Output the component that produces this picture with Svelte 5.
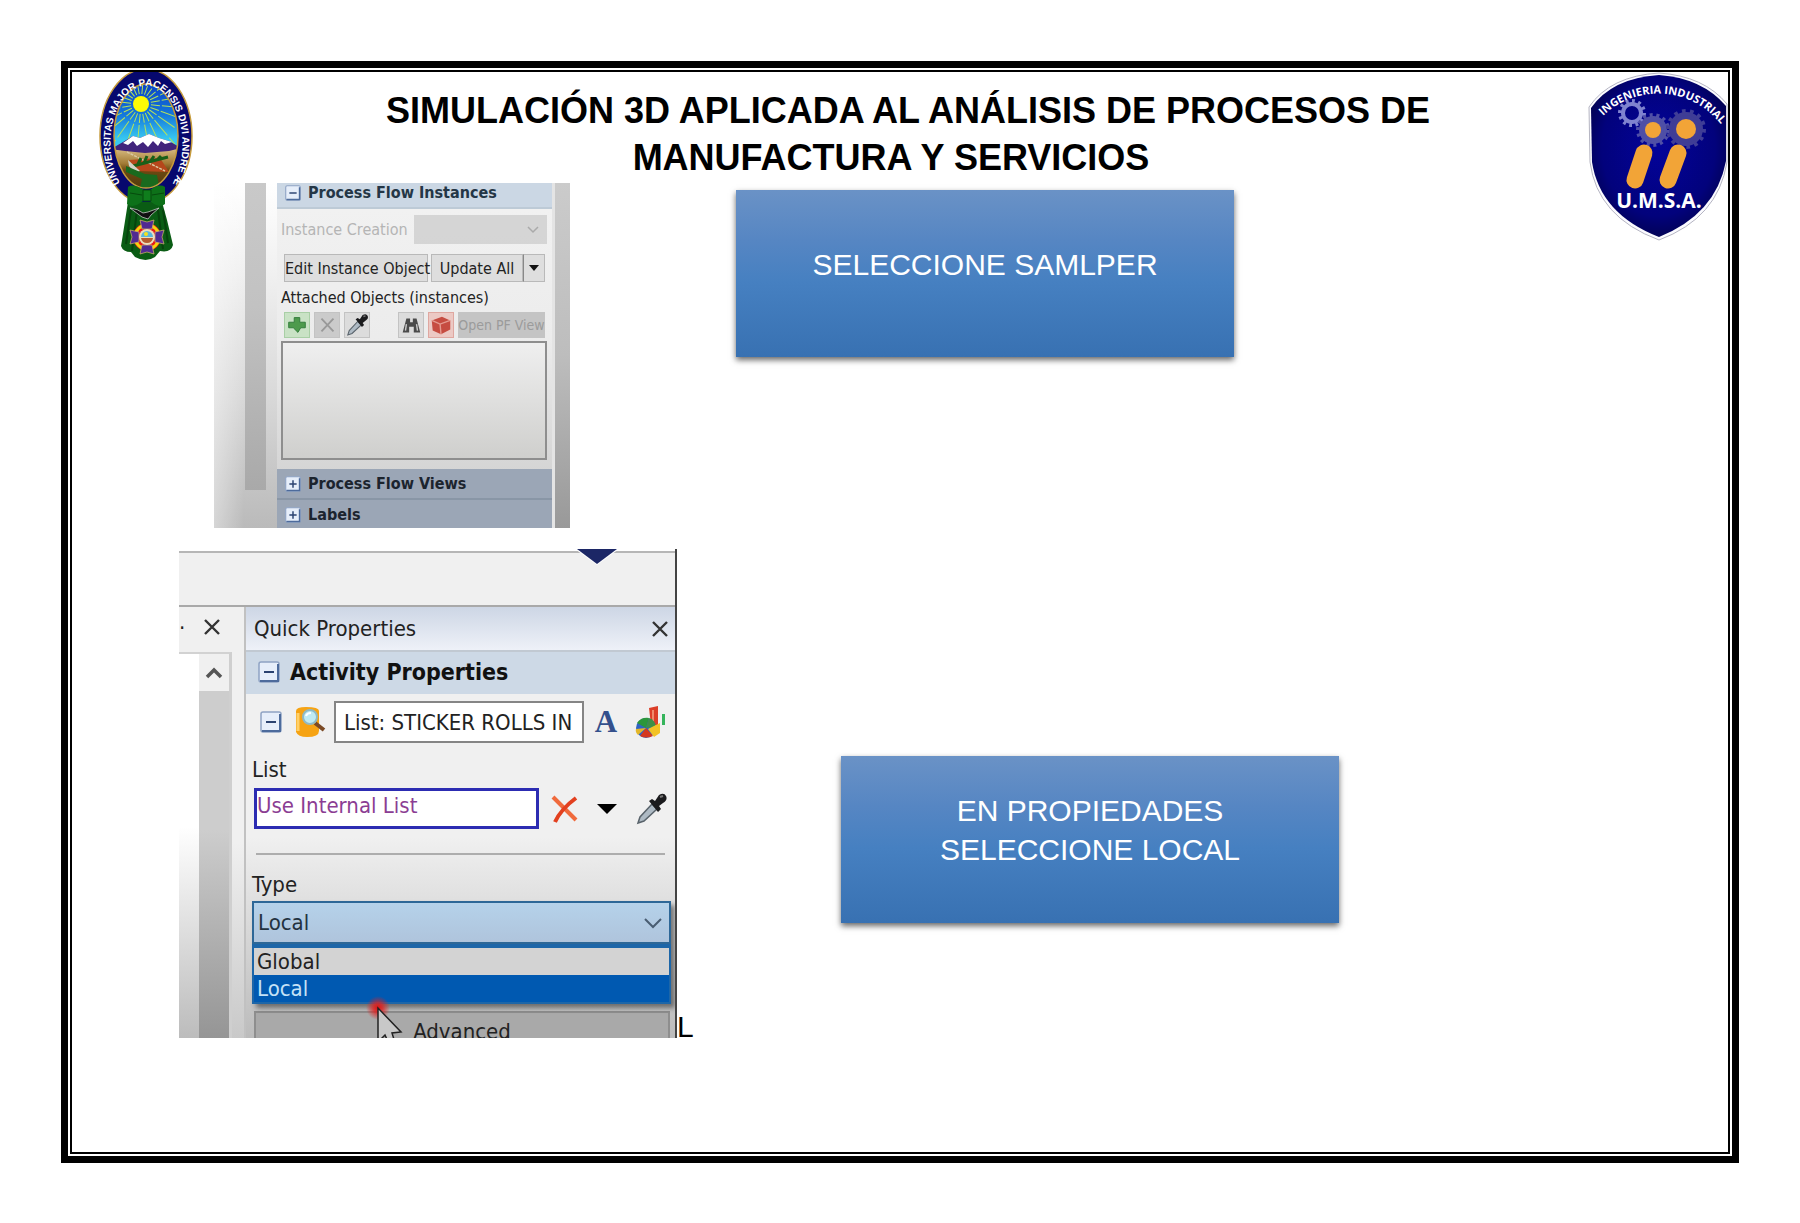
<script>
  let instanceMode = $state('');
  let type = $state('Local');
  let activity = $state('List: STICKER ROLLS IN');
  let source = $state('Use Internal List');
  const types = ['Global', 'Local'];
  const rays = Array.from({ length: 24 }, (_, i) => i * 15 + 5);
  const gears = [
    { x: 44, y: 41, r: 10, color: '#7f83cf', teeth: 12 },
    { x: 65, y: 58, r: 13, color: '#4f4fa6', teeth: 14 },
    { x: 98, y: 57, r: 16, color: '#3f3d96', teeth: 14 }
  ];
</script>

{#snippet toggle(label, plus)}
  <button class="toggle" aria-label={label}>
    <svg viewBox="0 0 22 22" aria-hidden="true">
      <rect x="1" y="1" width="20" height="20" rx="2" fill="#e6eefa" stroke="#8fa3c4" stroke-width="1.5" />
      <path d="M2 20H20V3" fill="none" stroke="#4d6b9c" stroke-width="2" />
      <path d={plus ? 'M6 11H16M11 6V16' : 'M6 11H16'} stroke="#2a4270" stroke-width="2" />
    </svg>
  </button>
{/snippet}

{#snippet dropper()}
  <svg viewBox="0 0 32 34" aria-hidden="true">
    <path d="M3 31L5 25L17 12L22 17L9 29Z" fill="#aebac4" stroke="#59636b" stroke-width="1.5" />
    <path d="M14 9L17 7L20 9L24 3Q29 0 31 4Q33 8 28 11L24 14L26 17L23 20Z" fill="#1b1b1d" />
    <path d="M25 5L28 4" stroke="#777" stroke-width="2" />
  </svg>
{/snippet}

<main class="page">
  <div class="frame">
    <div class="sheet">
      <header>
        <svg class="crest" viewBox="0 0 95 188" role="img" aria-label="Universitas Major Pacensis Divi Andreae">
          <defs>
            <linearGradient id="sky" x1="0" y1="0" x2="0" y2="1">
              <stop offset="0" stop-color="#0a3fc4" />
              <stop offset="0.3" stop-color="#1478dc" />
              <stop offset="0.52" stop-color="#38c8f0" />
            </linearGradient>
            <linearGradient id="land" x1="0" y1="0" x2="0" y2="1">
              <stop offset="0" stop-color="#d9bd84" />
              <stop offset="0.35" stop-color="#a37c36" />
              <stop offset="0.5" stop-color="#6d4a12" />
              <stop offset="1" stop-color="#4d360c" />
            </linearGradient>
            <clipPath id="oval"><ellipse cx="47" cy="64" rx="32" ry="52" /></clipPath>
            <path id="motto" d="M21 111A36 58 0 1 1 75 109" />
          </defs>
          <ellipse cx="47" cy="64" rx="46" ry="67" fill="#07086e" stroke="#c69b3c" stroke-width="1.5" />
          <g clip-path="url(#oval)">
            <rect x="12" y="10" width="70" height="110" fill="url(#sky)" />
            {#each rays as a}
              <path d="M42 22V-22" stroke="#b4e25a" stroke-width="1" stroke-dasharray="9 2 20 3" transform="rotate({a} 42 32)" />
            {/each}
            <circle cx="42" cy="32" r="8" fill="#fdfb05" />
            <rect x="12" y="76" width="70" height="44" fill="url(#land)" />
            <path d="M12 77L24 70L34 64L41 66L50 62L60 66L70 69L82 76L70 79L46 81L26 79Z" fill="#41247c" />
            <path d="M24 71L34 64L41 66L50 62L60 66L73 70L66 72L62 69L59 74L54 69L49 75L44 70L38 74L34 69L29 73Z" fill="#fff" />
            <path d="M30 88L61 86L70 100L38 99Z" fill="#b5471b" />
            <path d="M28 80L66 99" stroke="#d9c8a0" stroke-width="1.5" stroke-dasharray="3 1" />
            <path d="M34 94L69 85M39 92L42 86M45 91L48 84M51 90L55 84M58 88L62 84" stroke="#185f18" stroke-width="3" />
            <path d="M29 88L41 99L36 101L30 94Z" fill="#d2d2c8" />
            <path d="M27 94L46 102L58 103L61 120H40L43 107L27 100Z" fill="#1a6a1e" />
          </g>
          <ellipse cx="47" cy="64" rx="32" ry="52" fill="none" stroke="#c69b3c" stroke-width="1.5" />
          <text class="motto"><textPath href="#motto">UNIVERSITAS MAJOR PACENSIS DIVI ANDRE Æ</textPath></text>
          <path d="M29 130L23 168L22 174Q24 180 32 180L36 185Q47 191 56 185L61 179Q72 181 74 173L68 148L63 130Z" fill="#0a5c14" />
          <path d="M32 138L27 172M38 138L33 179M59 138L64 177M64 138L69 171" stroke="#07430d" stroke-width="2" />
          <path d="M29 115Q34 111 45 118H51Q60 111 66 115V132Q60 137 51 129H44Q34 137 28 132Z" fill="#0d7119" />
          <path d="M44 118H52V129H44ZM31 121L43 123M65 121L53 123" stroke="#064a0d" stroke-width="1" fill="#0f7d1c" />
          <path d="M31 136Q39 137 44 141L49 140L60 136L52 143L49 147L43 145Z" fill="#111" stroke="#ddd" stroke-width="0.7" />
          <circle cx="48" cy="165" r="14" fill="#e51b1b" />
          <circle cx="48" cy="165" r="12" fill="none" stroke="#f6d30b" stroke-width="3" />
          <g fill="#512a92" stroke="#d7b768" stroke-width="0.7">
            <path d="M41 148L48 150L55 148L53 157H43ZM41 182L48 180L55 182L53 173H43ZM31 158L33 165L31 172L40 170V160ZM65 158L63 165L65 172L56 170V160Z" />
          </g>
          <circle cx="48" cy="165" r="8" fill="#eadfbe" />
          <path d="M42 165A6 6 0 0 1 54 165Z" fill="#5bb7dc" />
          <path d="M42 166H54Q53 171 48 171Q43 171 42 166Z" fill="#b65c2e" />
          <circle cx="47" cy="162" r="2" fill="#f6e21a" />
        </svg>

        <h1>SIMULACIÓN 3D APLICADA AL ANÁLISIS DE PROCESOS DE<br />MANUFACTURA Y SERVICIOS</h1>

        <svg class="shield" viewBox="0 0 140 170" role="img" aria-label="Ingenieria Industrial U.M.S.A.">
          <defs>
            <radialGradient id="navy" cx="0.5" cy="0.45" r="0.6">
              <stop offset="0" stop-color="#03039a" />
              <stop offset="0.7" stop-color="#02027c" />
              <stop offset="1" stop-color="#020248" />
            </radialGradient>
            <path id="arch" d="M15 44A79 79 0 0 1 138 60" />
          </defs>
          <path d="M71 1Q116 4 139 32V90Q130 146 71 168Q9 145 2 90L1 35Q22 4 71 1Z" fill="#fbfbff" stroke="#b5b5c2" stroke-width="1" />
          <path d="M71 3Q114 6 138 34V89Q128 142 71 165Q12 142 4 90L3 36Q24 6 71 3Z" fill="url(#navy)" />
          {#each gears as g}
            <circle cx={g.x} cy={g.y} r={g.r - 1} fill="none" stroke={g.color} stroke-width="4" />
            <circle cx={g.x} cy={g.y} r={g.r + 2} fill="none" stroke={g.color} stroke-width="4" pathLength={g.teeth * 2} stroke-dasharray="0.9 1.1" />
          {/each}
          <circle cx="65" cy="58" r="11" fill="#4f4fa6" />
          <circle cx="98" cy="57" r="14" fill="#3f3d96" />
          <circle cx="65" cy="58" r="8" fill="#f2a437" />
          <circle cx="98" cy="57" r="10" fill="#f2a437" />
          <path d="M56 81L47 108M90 81L80 108" stroke="#f2a437" stroke-width="17" stroke-linecap="round" />
          <text class="arch"><textPath href="#arch">INGENIERIA INDUSTRIAL</textPath></text>
          <text class="umsa" x="71" y="136" text-anchor="middle">U.M.S.A.</text>
        </svg>
      </header>

      <section class="step first">
        <div class="shot instances">
          <div class="track"><i></i></div>
          <div class="pane">
            <h2 class="bar">{@render toggle('Collapse Process Flow Instances', false)}Process Flow Instances</h2>
            <div class="body">
              <div class="creation">
                <label for="mode">Instance Creation</label>
                <select id="mode" bind:value={instanceMode} disabled><option value=""></option></select>
                <svg class="tick" viewBox="0 0 12 8" aria-hidden="true"><path d="M1 1L6 6L11 1" fill="none" stroke="#aaa" stroke-width="1.5" /></svg>
              </div>
              <div class="actions">
                <button class="edit">Edit Instance Object</button>
                <button class="update">Update All</button>
                <button class="more" aria-label="Update options"><svg viewBox="0 0 10 6" aria-hidden="true"><path d="M0 0H10L5 6Z" fill="#111" /></svg></button>
              </div>
              <p>Attached Objects (instances)</p>
              <div class="tools">
                <button class="tool green" aria-label="Add"><svg viewBox="0 0 26 26" aria-hidden="true"><path d="M10 5H16V10H22V16H17L14 21L9 16H4V10H10Z" fill="#4d9a4c" stroke="#2f7a38" /></svg></button>
                <button class="tool dim" aria-label="Remove"><svg viewBox="0 0 26 26" aria-hidden="true"><path d="M7 6L20 20M20 6L7 20" stroke="#999" stroke-width="2" /></svg></button>
                <button class="tool wide" aria-label="Sample">{@render dropper()}</button>
                <button class="tool" aria-label="Find"><svg viewBox="0 0 26 26" aria-hidden="true"><path d="M4 21L8 6H12V10H15V6H19L23 21H16V15H11V21Z" fill="#4a4a4a" /><path d="M8 12L7 19M19 12L20 19" stroke="#ccc" stroke-width="1.5" /></svg></button>
                <button class="tool red" aria-label="Model"><svg viewBox="0 0 26 26" aria-hidden="true"><path d="M3 8L14 4L23 8V18L13 23L4 19Z" fill="#c64c41" /><path d="M3 8L12 12L23 8M12 12L13 23" fill="none" stroke="#e49a90" stroke-width="1.5" /></svg></button>
                <button class="open" disabled>Open PF View</button>
              </div>
              <div class="objects" role="listbox" aria-label="Attached Objects" tabindex="0"></div>
            </div>
            <h2 class="bar low">{@render toggle('Expand Process Flow Views', true)}Process Flow Views</h2>
            <h2 class="bar low">{@render toggle('Expand Labels', true)}Labels</h2>
          </div>
          <div class="edge"></div>
        </div>
        <div class="callout">SELECCIONE SAMLPER</div>
      </section>

      <section class="step second">
        <div class="shot quick">
          <div class="ribbon">
            <svg viewBox="0 0 44 16" aria-hidden="true"><path d="M0 0H44L22 16Z" fill="#fff" /><path d="M2 0H42L22 15Z" fill="#1c2766" /></svg>
          </div>
          <div class="split">
            <div class="doc">
              <div class="tab">
                <span>·</span>
                <button class="close" aria-label="Close view"><svg viewBox="0 0 18 16" aria-hidden="true"><path d="M2 1L16 15M16 1L2 15" stroke="#333" stroke-width="2.4" /></svg></button>
              </div>
              <div class="scroll">
                <button class="up" aria-label="Scroll up"><svg viewBox="0 0 18 12" aria-hidden="true"><path d="M2 10L9 3L16 10" fill="none" stroke="#555" stroke-width="3.5" /></svg></button>
                <div class="thumb"></div>
              </div>
            </div>
            <div class="props">
              <div class="title">Quick Properties
                <button class="close" aria-label="Close"><svg viewBox="0 0 18 16" aria-hidden="true"><path d="M2 1L16 15M16 1L2 15" stroke="#333" stroke-width="2.4" /></svg></button>
              </div>
              <h2 class="activity">{@render toggle('Collapse Activity Properties', false)}Activity Properties</h2>
              <div class="form">
                <div class="name-row">
                  {@render toggle('Collapse activity', false)}
                  <button class="icon" aria-label="Find activity">
                    <svg viewBox="0 0 32 34" aria-hidden="true">
                      <path d="M1 6Q1 2 11 2Q24 2 24 6V26Q24 32 12 32Q3 32 1 27Z" fill="#f6a313" />
                      <path d="M3 8V26" stroke="#ffd06a" stroke-width="3" />
                      <path d="M20 18L29 25" stroke="#7b4a25" stroke-width="4" />
                      <circle cx="15" cy="12" r="7" fill="#bfeaf2" stroke="#8fb9c4" stroke-width="2" />
                      <path d="M11 11Q12 8 16 8" stroke="#fff" stroke-width="2" fill="none" />
                    </svg>
                  </button>
                  <input class="activity-name" aria-label="Activity name" bind:value={activity} />
                  <button class="icon font" aria-label="Font">A</button>
                  <button class="icon" aria-label="Statistics">
                    <svg viewBox="0 0 32 34" aria-hidden="true">
                      <path d="M14 3L23 1V20H16Z" fill="#dc3f28" />
                      <path d="M18 5V17" stroke="#f08a6c" stroke-width="2" />
                      <path d="M27 9H30V20H27Z" fill="#34b45b" />
                      <circle cx="11" cy="23" r="10" fill="#2f63c5" />
                      <path d="M11 23L2 18Q6 12 14 13Z" fill="#2b963b" />
                      <path d="M11 23L5 31Q11 34 18 31Z" fill="#d5371f" />
                      <path d="M11 23L3 30Q0 27 1 24Z" fill="#e3b72a" />
                      <path d="M11 23L14 13Q20 15 21 22Z" fill="#3f8f46" />
                      <path d="M13 24L25 18V28L19 32Z" fill="#f3c224" />
                    </svg>
                  </button>
                </div>
                <label class="caption" for="source">List</label>
                <div class="source-row">
                  <input id="source" bind:value={source} />
                  <button class="icon" aria-label="Clear"><svg viewBox="0 0 28 30" aria-hidden="true"><path d="M2 3L25 26" stroke="#f06a3c" stroke-width="4" /><path d="M25 4Q10 15 4 28" fill="none" stroke="#e2401f" stroke-width="4" /></svg></button>
                  <button class="icon" aria-label="Choose list"><svg class="caret" viewBox="0 0 20 12" aria-hidden="true"><path d="M0 1H20L10 11Z" fill="#000" /></svg></button>
                  <button class="icon" aria-label="Sample list">{@render dropper()}</button>
                </div>
                <hr />
                <label class="caption" for="type">Type</label>
                <div class="type">
                  <select id="type" bind:value={type}>
                    {#each types as t}<option>{t}</option>{/each}
                  </select>
                  <svg class="chevron" viewBox="0 0 18 12" aria-hidden="true"><path d="M1 2L9 10L17 2" fill="none" stroke="#4a5d72" stroke-width="2" /></svg>
                  <ul role="listbox" aria-label="Type options">
                    {#each types as t}
                      <li role="option" aria-selected={t === type} class:chosen={t === type}>{t}</li>
                    {/each}
                  </ul>
                </div>
                <button class="advanced">Advanced</button>
              </div>
            </div>
          </div>
          <svg class="pointer" viewBox="0 0 50 50" aria-hidden="true">
            <defs><radialGradient id="glow"><stop offset="0" stop-color="#dd1111" /><stop offset="0.4" stop-color="#d22" stop-opacity="0.8" /><stop offset="1" stop-color="#d22" stop-opacity="0" /></radialGradient></defs>
            <circle cx="15" cy="12" r="12" fill="url(#glow)" />
            <path d="M15 12V46L22 39L27 50H33L29 37L38 36Z" fill="#c8c8c8" stroke="#222" stroke-width="1.5" />
          </svg>
        </div>
        <span class="stray">L</span>
        <div class="callout two">EN PROPIEDADES<br />SELECCIONE LOCAL</div>
      </section>
    </div>
  </div>
</main>

<style>
  :global(body) { background: #fff; }
  * { box-sizing: border-box; }
  button, input, select { font: inherit; color: inherit; margin: 0; padding: 0; border: 0; background: none; border-radius: 0; appearance: none; }
  svg { display: block; }
  h1, h2, p, ul { margin: 0; padding: 0; }
  .page { min-height: 100vh; padding: 61px 61px 60px; display: flex; font-family: "Liberation Sans", Arial, sans-serif; color: #000; }
  .frame { flex: 1; border: 7px solid #000; padding: 2px; display: flex; }
  .sheet { flex: 1; border: 2px solid #000; min-width: 0; }

  header { display: flex; align-items: flex-start; justify-content: space-between; height: 111px; padding-left: 27px; }
  .crest { width: 95px; height: 188px; flex: none; }
  .shield { width: 140px; height: 170px; flex: none; }
  h1 { flex: 1; padding-top: 15px; font-size: 36px; line-height: 47px; font-weight: bold; text-align: center; text-indent: 34px; }
  .motto { font: bold 10px "Liberation Sans", sans-serif; fill: #fff; }
  .arch { font: bold 11px "Open Sans", sans-serif; fill: #fff; }
  .umsa { font: bold 21px "Open Sans", sans-serif; fill: #fff; }

  .step { display: flex; align-items: flex-start; }
  .first { padding-left: 142px; gap: 166px; }
  .second { padding-left: 107px; margin-top: 21px; }
  .callout { width: 498px; height: 167px; margin-top: 7px; padding-top: 55px; text-align: center; color: #fff; font-size: 30px; line-height: 39px; background: linear-gradient(#6a92c6, #5686c3 30%, #4680c1 55%, #3871b2); box-shadow: 0 3px 6px rgba(0, 0, 0, 0.6); }
  .two { margin: 207px 0 0 148px; padding-top: 35px; }
  .stray { align-self: flex-end; width: 16px; font-size: 30px; line-height: 22px; }

  .shot { position: relative; flex: none; overflow: hidden; display: flex; font-family: "DejaVu Sans Condensed", "DejaVu Sans", Tahoma, sans-serif; font-stretch: condensed; color: #222; }
  .toggle { width: 16px; flex: none; }

  .instances { width: 356px; height: 345px; font-size: 16px; background: linear-gradient(90deg, rgba(255, 255, 255, 0.4), transparent 30px), linear-gradient(#fff, #f1f1f1 25%, #dadada 60%, #bababa); }
  .track { width: 52px; padding-left: 31px; flex: none; }
  .track i { display: block; height: 307px; background: linear-gradient(#c9c9c9, #c2c2c2 40%, #a9a9a9); }
  .pane { flex: 1; margin-left: 11px; min-width: 0; background: linear-gradient(#f2f2f2, #ececec 45%, #cbcbcb); display: flex; flex-direction: column; }
  .edge { width: 18px; flex: none; border-left: 3px solid #e4e4e4; background: linear-gradient(#cbcbcb, #bdbdbd 50%, #999); }
  .bar { display: flex; flex: none; align-items: center; gap: 7px; height: 26px; padding: 0 8px 4px; font-size: 16px; line-height: 20px; font-weight: bold; color: #243646; background: #cbd7e4; border-bottom: 2px solid #bdcad6; }
  .low { height: 31px; padding-bottom: 0; color: #1c242e; background: #9ba6b6; border-bottom: 2px solid #8996a6; }
  .body { flex: none; height: 260px; padding: 6px 5px 0 4px; }
  .creation { position: relative; display: flex; justify-content: space-between; align-items: center; white-space: nowrap; color: #b5b5b5; }
  .creation select { width: 133px; height: 29px; background: #c9c9c9; }
  .tick { position: absolute; right: 8px; width: 12px; }
  .actions { display: flex; margin-top: 10px; padding: 0 2px 0 3px; height: 28px; }
  .actions button { border: 1px solid #b9b9b9; background: #dedede; white-space: nowrap; }
  .edit { width: 144px; margin-right: 3px; }
  .update { flex: 1; }
  .actions .more { width: 22px; border-left: 1px solid #888; }
  .more svg { width: 10px; margin: auto; }
  p { margin-top: 6px; line-height: 20px; white-space: nowrap; }
  .tools { display: flex; gap: 4px; margin-top: 4px; padding: 0 2px 0 3px; height: 26px; }
  .tool { width: 26px; border: 1px solid #c3c3c3; background: #dcdcdc; flex: none; }
  .tool svg { width: 100%; height: 100%; }
  .green { background: #c9e2c5; border-color: #a9cfa6; }
  .dim { background: #cbcbcb; }
  .red { background: #ecc9c4; border-color: #dfa7a0; }
  .wide { margin-right: 24px; }
  .open { flex: 1; min-width: 0; background: #c4c4c4; color: #9b9b9b; font-size: 14px; white-space: nowrap; }
  .objects { margin-top: 3px; height: 119px; border: 2px solid #8e8e8e; background: linear-gradient(#efefef, #cfcfcd); }

  .quick { width: 498px; height: 489px; flex-direction: column; font-size: 22px; border-right: 2px solid #444; background: linear-gradient(#f0f0f0 60%, #c9c9c9); }
  .ribbon { height: 58px; flex: none; background: linear-gradient(#fff 2px, #b6b6b6 2px, #b6b6b6 4px, #f0f0f0 4px); border-bottom: 2px solid #a9a9a9; }
  .ribbon svg { width: 44px; height: 16px; margin-left: 396px; }
  .split { flex: 1; display: flex; min-height: 0; }
  .doc { width: 67px; padding-right: 12px; flex: none; display: flex; flex-direction: column; border-right: 2px solid #c1c1c1; }
  .tab { height: 45px; display: flex; justify-content: space-between; align-items: center; padding: 0 11px 5px 0; }
  .close svg { width: 18px; height: 16px; }
  .scroll { flex: 1; padding-left: 20px; border-top: 2px solid #d2d2d2; border-right: 3px solid #cfcfcf; display: flex; flex-direction: column; background: linear-gradient(#fff 45%, #bcbcbc); }
  .up { height: 37px; flex: none; background: #f0f0f0; }
  .up svg { width: 18px; margin: auto; }
  .thumb { flex: 1; background: linear-gradient(#cdcdcd 40%, #959595); }
  .props { flex: 1; min-width: 0; display: flex; flex-direction: column; }
  .title { display: flex; flex: none; justify-content: space-between; align-items: center; height: 43px; padding: 0 6px 0 8px; background: linear-gradient(#cdd6e5, #eef1f8); }
  .activity { display: flex; flex: none; align-items: center; gap: 10px; height: 44px; padding: 0 0 2px 12px; font-size: 23px; line-height: 26px; color: #111; background: #cdd9e6; border-top: 2px solid #c1c9d2; }
  .quick .toggle { width: 22px; }
  .form { padding: 7px 4px 0 6px; display: flex; flex-direction: column; background: linear-gradient(#f0f0f0 40%, #b8b8b8); }
  .name-row { display: flex; align-items: center; height: 42px; padding: 0 4px 0 8px; }
  .icon { flex: none; width: 32px; }
  .name-row .icon { margin: 0 0 0 13px; }
  .activity-name { flex: 1; min-width: 0; height: 42px; margin-left: 7px; padding-left: 8px; border: 2px solid #858585; background: #fff; }
  .name-row .font { width: 24px; margin-left: 10px; margin-right: 4px; font: bold 31px "Liberation Serif", serif; color: #34508c; }
  .caption { line-height: 26px; }
  .name-row + .caption { margin-top: 14px; }
  .source-row { display: flex; align-items: center; gap: 12px; margin-top: 5px; padding: 0 4px 0 2px; }
  .source-row input { flex: 1; min-width: 0; height: 41px; padding: 0 0 6px; border: 3px solid #2c2cb2; background: #fff; color: #8b3d93; }
  .source-row .icon:nth-child(2) { width: 28px; }
  .caret { width: 20px; margin: auto; }
  hr { width: 100%; height: 2px; margin: 24px 0 17px; border: 0; background: linear-gradient(90deg, transparent 4px, #adadad 4px calc(100% - 6px), transparent 0); }
  .type { position: relative; margin-top: 3px; box-shadow: 4px 4px 5px rgba(0, 0, 0, 0.45); }
  .type select { display: block; width: 100%; height: 43px; padding-left: 4px; border: 2px solid #2d6797; background: linear-gradient(#b5d2ea, #afc4dc); color: #23323f; }
  .chevron { position: absolute; top: 16px; right: 9px; width: 18px; }
  ul { list-style: none; border: 2px solid #1d66a8; border-top-width: 4px; background: #d3d3d3; }
  li { height: 27px; line-height: 27px; padding-left: 3px; }
  .chosen { background: #0059b1; color: #c5e2f6; }
  .advanced { height: 41px; margin: 7px 1px 0 2px; flex: none; border: 2px solid #8e8e8e; background: #a9a9a9; color: #222; }
  .pointer { position: absolute; left: 184px; top: 447px; width: 50px; height: 50px; }
</style>
